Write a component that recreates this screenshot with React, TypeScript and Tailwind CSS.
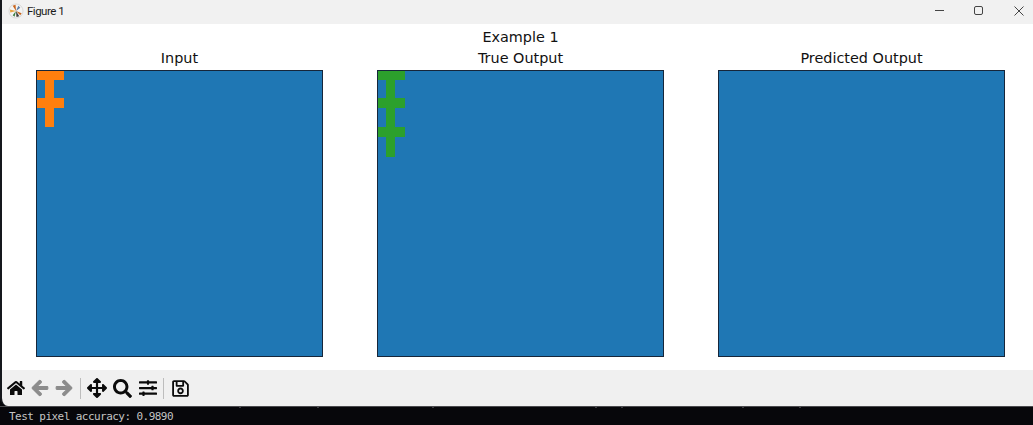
import React from "react";
import { FaHome, FaArrowLeft, FaArrowRight, FaArrowsAlt, FaSearch, FaSlidersH, FaRegSave } from "react-icons/fa";

function Plot({ title, color, bars, stemEnd }: { title: string; color?: string; bars?: number[][]; stemEnd?: number }) {
  return (
    <div className="flex w-[287px] flex-col items-center">
      <div className="h-[20px] text-[14.4px] leading-[17px] text-[#111]">{title}</div>
      <div className="h-[287px] w-[287px] border border-[#16263a] bg-[#1f77b4]">
        {color && (
          <svg width="285" height="285" viewBox="0 0 285 285" className="block" shapeRendering="crispEdges">
            {bars!.map(([y, h]) => (
              <rect key={y} x="0" y={y} width="27" height={h} fill={color} />
            ))}
            <rect x="8" y="0" width="9" height={stemEnd} fill={color} />
          </svg>
        )}
      </div>
    </div>
  );
}

function Logo() {
  return (
    <svg width="16" height="16" viewBox="0 0 17 17" className="mb-[3px] ml-[6px]">
      <circle cx="8.5" cy="8.5" r="7.5" fill="#f4f4f4" stroke="#d0d0d0" strokeWidth="0.8" />
      <path d="M8.5 8.5 L5 3 L8 1.8 Z" fill="#c8641c" />
      <path d="M8.5 8.5 L2 7 L2.5 10 Z" fill="#e8a33d" />
      <path d="M8.5 8.5 L12 14 L9 15 Z" fill="#3d3d3d" />
      <path d="M8.5 8.5 L14.5 11 L13 13 Z" fill="#c8641c" />
      <path d="M8.5 8.5 L5 13 L7 14.5 Z" fill="#3f7f3f" />
      <path d="M8.5 8.5 L13 5 L11 3 Z" fill="#5c7ea8" />
    </svg>
  );
}

export default function App() {
  return (
    <div className="flex h-[425px] w-[1033px] flex-col overflow-hidden bg-[#07070b]">
      <div className="flex h-[406px] flex-col overflow-hidden rounded-bl-[8px] border-l-2 border-[#15181d]">
        <div className="ml-[-2px] flex h-[24px] items-center bg-[#f1f1f1] pl-[2px]">
          <Logo />
          <span className="ml-[3px] text-[11.5px] tracking-[-0.5px] text-[#1a1a1a] [font-family:'Roboto',sans-serif]">Figure 1</span>
          <div className="ml-auto flex items-center">
            <div className="flex h-[24px] w-[27px] items-center justify-center">
              <div className="mb-[3px] h-px w-[9px] bg-[#444]" />
            </div>
            <div className="flex h-[24px] w-[51px] items-center justify-center">
              <div className="mb-[3px] h-[9px] w-[9px] rounded-[2px] border border-[#444]" />
            </div>
            <div className="flex h-[24px] w-[29px] items-center justify-center">
              <svg width="10" height="10" viewBox="0 0 10 10" className="mb-[3px]">
                <path d="M0.5 0.5 L9.5 9.5 M9.5 0.5 L0.5 9.5" stroke="#444" strokeWidth="1" fill="none" />
              </svg>
            </div>
          </div>
        </div>
        <div className="flex h-[346px] flex-col bg-white [font-family:'DejaVu_Sans',sans-serif]">
          <div className="h-[26px] pl-[6px] pt-[5px] text-center text-[14.4px] leading-[17px] text-[#111]">Example 1</div>
          <div className="flex gap-[54px] pl-[34px]">
            <Plot title="Input" color="#ff7f0e" bars={[[0, 9], [27, 10]]} stemEnd={56} />
            <Plot title="True Output" color="#2ca02c" bars={[[0, 9], [27, 10], [56, 10]]} stemEnd={86} />
            <Plot title="Predicted Output" />
          </div>
        </div>
        <div className="flex h-[36px] items-center bg-[#f0f0f0] pl-[1px] text-[#0b0b0b]">
          <div className="flex w-[25px] justify-center"><FaHome size={18} /></div>
          <div className="flex w-[24px] justify-center text-[#8c8c8c]"><FaArrowLeft size={18} stroke="#8c8c8c" strokeWidth={30} /></div>
          <div className="flex w-[24px] justify-center text-[#8c8c8c]"><FaArrowRight size={18} stroke="#8c8c8c" strokeWidth={30} /></div>
          <div className="ml-[4px] h-[21px] w-px bg-[#bdbdbd]" />
          <div className="ml-[4px] flex w-[24px] justify-center"><FaArrowsAlt size={20} /></div>
          <div className="ml-[1px] flex w-[25px] justify-center"><FaSearch size={19} /></div>
          <div className="flex w-[26px] justify-center"><FaSlidersH size={18} /></div>
          <div className="ml-[2px] h-[21px] w-px bg-[#bdbdbd]" />
          <div className="ml-[4px] flex w-[24px] justify-center"><FaRegSave size={19} /></div>
        </div>
      </div>
      <svg width="1033" height="2" viewBox="0 0 1033 2" className="block">
        <path d="M0 0.5 H1033" stroke="#4a4a4e" strokeWidth="1" />
        <path d="M240 1 V2 M318 1 V2 M433 1 V2 M596 1 V2 M622 1 V2 M743 1 V2 M800 1 V2" stroke="#77777a" strokeWidth="1" />
      </svg>
      <div className="h-[17px] pl-[9px] pt-[1px] text-[11px] leading-[15px] tracking-[-0.55px] text-[#c4c4c4] [font-family:'DejaVu_Sans_Mono',monospace]">
        Test pixel accuracy: 0.9890
      </div>
    </div>
  );
}
